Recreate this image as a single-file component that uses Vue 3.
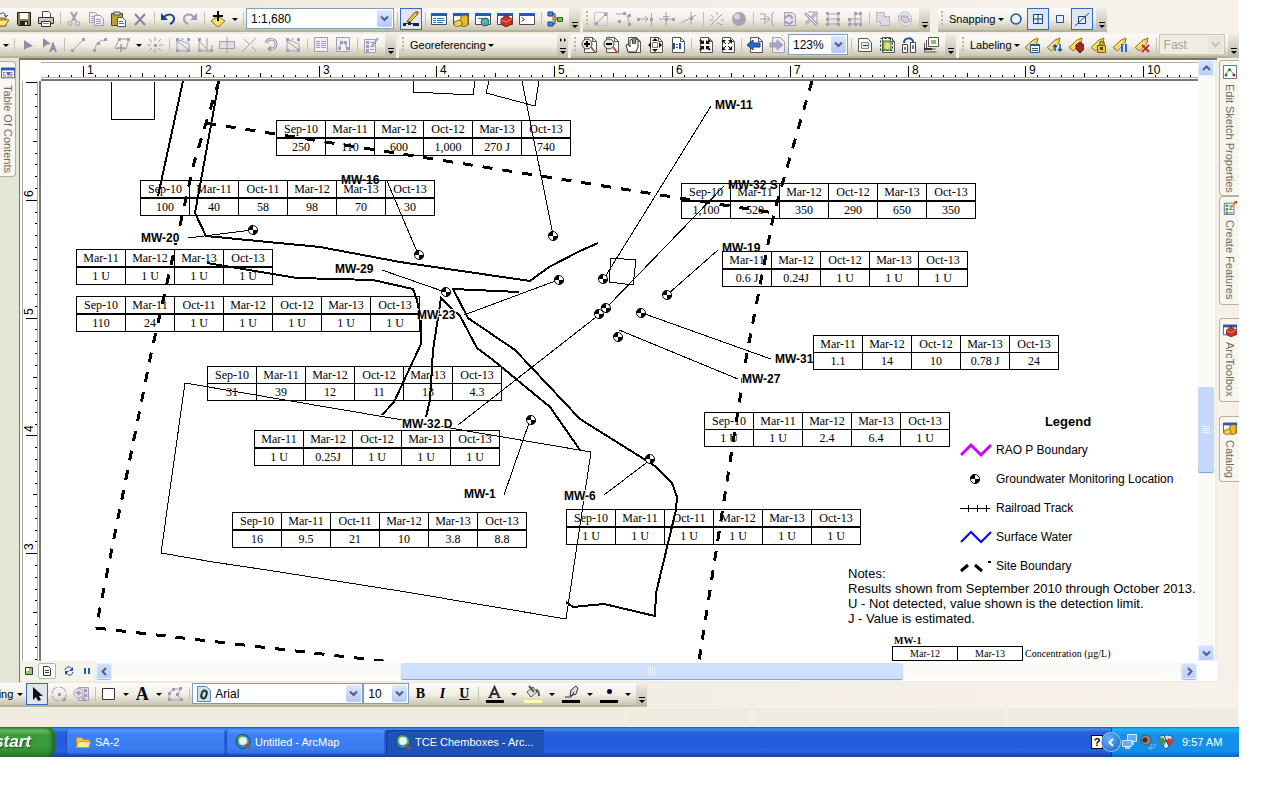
<template>
  <div class="screen">
    <div class="toolbars">
      <div v-for="(row, r) in toolbarRows" :key="r" class="toolbar-row">
        <div v-for="bar in row" :key="bar.name" class="toolbar" :class="bar.name" role="toolbar" :aria-label="bar.name">
          <span v-if="bar.grip" class="grip"></span>
          <template v-for="(item, i) in bar.items" :key="i">
            <span v-if="item === '|'" class="separator"></span>
            <button v-else-if="item === 'v'" class="arrow-button" aria-label="More"><i class="arrow"></i></button>
            <button v-else-if="item.menu" class="menu-button">{{ item.menu }}<i class="arrow"></i></button>
            <div v-else-if="item.combo" class="combo" :class="[item.size, { disabled: item.disabled }]">
              <select :aria-label="item.size" :disabled="item.disabled">
                <option>{{ item.combo }}</option>
              </select>
              <span class="combo-arrow"><svg viewBox="0 0 9 9"><path d="M1 2.5 4.5 6 8 2.5" /></svg></span>
            </div>
            <button
              v-else
              class="tool"
              :class="{ active: bar.active && bar.active.includes(item) }"
              :aria-label="item"
            >
              <svg class="icon" viewBox="0 0 16 16" v-html="icons[item]"></svg>
            </button>
          </template>
          <button class="overflow" aria-label="Toolbar options">
            <svg viewBox="0 0 11 24">
              <path v-if="bar.chevrons" d="M3 4v4l2-2zM7 4v4l2-2z" />
              <path d="M3 14h6v1H3zM3 17h6l-3 3z" />
            </svg>
          </button>
        </div>
      </div>
    </div>

    <div class="workspace">
      <div class="dock dock-left">
        <button class="dock-tab">
          <svg class="icon" viewBox="0 0 16 16" v-html="icons.contents"></svg>Table Of Contents
        </button>
      </div>

      <div class="view">
        <div class="corner"></div>
        <svg class="ruler-top">
          <path class="ruler-edge" d="M0 2.5H2000M0 17.5H2000" />
          <g v-for="t in topTicks" :key="t.n">
            <path class="tick" :d="`M${t.pos}.5 17V${17 - t.size}`" />
            <text v-if="t.label" :x="t.pos + 4" y="14">{{ t.label }}</text>
          </g>
        </svg>
        <svg class="ruler-left">
          <path class="ruler-edge" d="M2.5 0V2000M17.5 0V2000" />
          <g v-for="t in leftTicks" :key="t.n">
            <path class="tick" :d="`M17 ${t.pos}.5H${17 - t.size}`" />
            <text v-if="t.label" :transform="`translate(13 ${t.pos - 3}) rotate(-90)`">{{ t.label }}</text>
          </g>
        </svg>

        <main class="map">
          <svg class="drawing">
            <g transform="translate(-41 -81)">
              <path v-for="d in thinLines" :key="d" class="thin" :d="d" />
              <path v-for="d in roads" :key="d" class="road" :d="d" />
              <path v-for="d in boundary" :key="d" class="site" :d="d" />
              <path v-for="d in leaders" :key="d" class="thin" :d="d" />
              <g v-for="w in wells" :key="w.join()" :transform="`translate(${w[0]} ${w[1]})`" v-html="wellMark"></g>
              <text v-for="l in labels" :key="l.text" class="well-label" :x="l.x" :y="l.y">{{ l.text }}</text>
            </g>
          </svg>

          <table
            v-for="box in chemboxes"
            :key="box.x + '-' + box.y"
            class="chembox"
            :class="{ light: box.light }"
            :style="{ left: box.x - 41 + 'px', top: box.y - 81 + 'px' }"
          >
            <thead>
              <tr><th v-for="c in box.cells" :key="c[0]" scope="col">{{ c[0] }}</th></tr>
            </thead>
            <tbody>
              <tr><td v-for="c in box.cells" :key="c[0]">{{ c[1] }}</td></tr>
            </tbody>
          </table>

          <section class="legend">
            <h2>Legend</h2>
            <ul>
              <li v-for="l in legend" :key="l.text">
                <svg viewBox="0 0 32 16" v-html="l.mark"></svg>{{ l.text }}
              </li>
            </ul>
          </section>

          <div class="notes">
            <p>Notes:</p>
            <p>Results shown from September 2010 through October 2013.</p>
            <p>U - Not detected, value shown is the detection limit.</p>
            <p>J - Value is estimated.</p>
          </div>

          <div class="sample">
            <strong>MW-1</strong>
            <div class="sample-row">
              <table>
                <tbody>
                  <tr><td>Mar-12</td><td>Mar-13</td></tr>
                  <tr><td></td><td></td></tr>
                </tbody>
              </table>
              <span>Concentration (µg/L)</span>
            </div>
          </div>
        </main>

        <div class="scroll-v">
          <button class="scroll-button" aria-label="Scroll up"><svg viewBox="0 0 9 9"><path d="M1 6 4.5 2.5 8 6" /></svg></button>
          <div class="track">
            <div class="thumb"><svg viewBox="0 0 8 8"><path d="M0 .5h8M0 2.5h8M0 4.5h8M0 6.5h8" /></svg></div>
          </div>
          <button class="scroll-button" aria-label="Scroll down"><svg viewBox="0 0 9 9"><path d="M1 2.5 4.5 6 8 2.5" /></svg></button>
        </div>

        <div class="scroll-h">
          <div class="view-buttons">
            <button v-for="n in ['dataView', 'layoutView', 'refresh', 'pause']" :key="n" :class="n" :aria-label="n">
              <svg viewBox="0 0 10 10" v-html="icons[n]"></svg>
            </button>
          </div>
          <button class="scroll-button" aria-label="Scroll left"><svg viewBox="0 0 9 9"><path d="M6 1 2.5 4.5 6 8" /></svg></button>
          <div class="track">
            <div class="thumb"><svg viewBox="0 0 8 8"><path d="M.5 0v8M2.5 0v8M4.5 0v8M6.5 0v8" /></svg></div>
          </div>
          <button class="scroll-button" aria-label="Scroll right"><svg viewBox="0 0 9 9"><path d="M3 1 6.5 4.5 3 8" /></svg></button>
        </div>
      </div>

      <div class="dock dock-right">
        <button v-for="t in rightTabs" :key="t.text" class="dock-tab" :class="t.icon">
          <svg class="icon" viewBox="0 0 16 16" v-html="icons[t.icon]"></svg>{{ t.text }}
        </button>
      </div>
    </div>

    <div class="toolbar-row draw-row">
      <div class="toolbar" role="toolbar" aria-label="Draw">
        <button class="menu-button drawing-menu">Drawing<i class="arrow"></i></button>
        <button class="tool active" aria-label="Select elements"><svg class="icon" viewBox="0 0 16 16" v-html="icons.pointer"></svg></button>
        <button class="tool" aria-label="Rotate"><svg class="icon" viewBox="0 0 16 16" v-html="icons.rotateElement"></svg></button>
        <button class="tool" aria-label="Zoom to elements"><svg class="icon" viewBox="0 0 16 16" v-html="icons.zoomElements"></svg></button>
        <span class="separator"></span>
        <button class="tool" aria-label="Rectangle"><svg class="icon" viewBox="0 0 16 16" v-html="icons.rectangle"></svg></button>
        <button class="arrow-button" aria-label="Shapes"><i class="arrow"></i></button>
        <button class="tool letter big">A</button>
        <button class="arrow-button" aria-label="Text tools"><i class="arrow"></i></button>
        <button class="tool" aria-label="Edit vertices"><svg class="icon" viewBox="0 0 16 16" v-html="icons.editPolygon"></svg></button>
        <span class="separator"></span>
        <div class="combo font">
          <svg class="icon" viewBox="0 0 16 16" v-html="icons.openType"></svg>
          <select aria-label="Font"><option>Arial</option></select>
          <span class="combo-arrow"><svg viewBox="0 0 9 9"><path d="M1 2.5 4.5 6 8 2.5" /></svg></span>
        </div>
        <div class="combo font-size">
          <select aria-label="Font size"><option>10</option></select>
          <span class="combo-arrow"><svg viewBox="0 0 9 9"><path d="M1 2.5 4.5 6 8 2.5" /></svg></span>
        </div>
        <button class="tool letter">B</button>
        <button class="tool letter italic">I</button>
        <button class="tool letter underline">U</button>
        <span class="separator"></span>
        <template v-for="n in ['fontColor', 'fillColor', 'lineColor', 'markerColor']" :key="n">
          <button class="tool color" :aria-label="n"><svg viewBox="0 0 18 18" v-html="icons[n]"></svg></button>
          <button class="arrow-button" :aria-label="n + ' options'"><i class="arrow"></i></button>
        </template>
        <button class="overflow" aria-label="Toolbar options">
          <svg viewBox="0 0 11 24"><path d="M3 14h6v1H3zM3 17h6l-3 3z" /></svg>
        </button>
      </div>
    </div>

    <div class="status">
      <span></span><span></span><span></span><span></span>
    </div>

    <footer class="taskbar">
      <button class="start"><span>start</span></button>
      <button v-for="t in tasks" :key="t.text" class="task" :class="{ current: t.current }">
        <svg class="icon" viewBox="0 0 16 16" v-html="icons[t.icon]"></svg><span>{{ t.text }}</span>
      </button>
      <button class="help" aria-label="Help">?</button>
      <div class="tray">
        <button class="tray-toggle" aria-label="Show hidden icons"><svg viewBox="0 0 9 9"><path d="M6 1 2.5 4.5 6 8" /></svg></button>
        <svg v-for="n in ['network', 'volume', 'shield']" :key="n" class="icon" viewBox="0 0 16 16" v-html="icons[n]"></svg>
        <time>9:57 AM</time>
      </div>
    </footer>
  </div>
</template>

<script setup>
// small helpers for the 16px toolbar glyphs
const GREY = '#a09db5'
const line = (d, c = GREY, w = 1) => `<path d="${d}" fill="none" stroke="${c}" stroke-width="${w}"/>`
const fill = (d, c = GREY, s = 'none') => `<path d="${d}" fill="${c}" stroke="${s}"/>`
const dots = (pts, c = GREY) => pts.map(([x, y]) => `<rect x="${x}" y="${y}" width="3" height="3" fill="${c}"/>`).join('')

const page = fill('M3.5 .5h8l4 4v11h-12z', '#fff', '#555') + line('M11.5 .5v4h4', '#555')
const win = fill('M.5 2.5h15v11H.5z', '#fff', '#4a4a50') + fill('M0 2h16v3H0z', '#2358c4')
const tag = fill('M1 10.5 9 3l5-2-1 5-7.5 8z', '#f2d84a', '#8a7426') + line('m4 10 6-6m-4 8 6-6', '#fff8b8')
const toolbox = fill('M4 8l5-3 6 3v5l-6 3-5-3z', '#cf3527', '#7d1a12') + line('M7 6c0-3 5-3 5 0', '#7d1a12') + line('M4 9l5 2 6-3', '#f0897c')
const cabinet = fill('M8 5l5-1 2 2v8l-5 2-3-2z', '#e5b92b', '#8a6a10') + fill('M1 11l5-2 3 2v3l-5 2-3-2z', '#f0cf4c', '#8a6a10')
const sheet = (x, y) => fill(`M${x}.5 ${y}.5h6l3 3v7h-9z`, '#eeeef4', GREY) + line(`M${x + 2} ${y + 4}.5h5m-5 2h5m-5 2h5`)
const globe = '<circle cx="8" cy="7.500" r="7" fill="#2b8ea8" stroke="#14506a"/>' + fill('M3 3l4-2 1 3-3 3-2 1zM10 3l4 3-1 4-3-2z', '#62a83c') +
  '<circle cx="8" cy="7" r="4" fill="#e8f6fc" stroke="#c8d4dc"/>' + line('m11 10 4 5', '#b4482a', 2)

const icons = {
  open: fill('M-3 5h6l2 2h7v8H-3z', '#e8b93c', '#8a6a1a') + fill('M-1 15l4-6h12l-4 6z', '#ffe48a', '#8a6a1a') + line('M6 3c3-2 5-1 6 2m-2-1 2 2 2-2', '#1f55a8'),
  save: fill('M1.500 1.500h13v13h-12l-1-1z', '#8b8343', '#1c1c1c') + fill('M4 2h8v6H4z', '#fff') + fill('M4 10h8v5H4z', '#222') + fill('M9 11h2v3H9z', '#ddd'),
  print: fill('M4.500 .5h6l2 2v4h-8z', '#fff', '#444') + fill('M.5 6.500h15v6H.5z', '#c9c9c2', '#333') + fill('M3.500 10.500h9v5h-9z', '#fff', '#333') + fill('M11 8h3v1h-3z', '#e8c020') + line('M5 12.500h6', '#888'),
  cut: line('M5 1l5 9M11 1 6 10', GREY, 2) + '<circle cx="4" cy="12.500" r="2" fill="none" stroke="#a09db5"/><circle cx="11.500" cy="12.500" r="2" fill="none" stroke="#a09db5"/>',
  copy: sheet(1, 1) + sheet(6, 4),
  paste: fill('M1.500 2.500h11v12h-11z', '#c29a3a', '#5a4415') + fill('M4 1h6v3H4z', '#d8d4c8', '#555') + fill('M7.500 6.500h5l3 3v6h-8z', '#fff', '#3b5a96') + line('M9 10.500h4m-4 2h5', '#3b6fc0'),
  remove: line('M3 3l10 11M13 3 3 14', '#8583a0', 2),
  undo: line('M4 6c4-4 10-3 10 2 0 3-2 4-4 5', '#14418f', 2) + fill('M1 2v7h7z', '#14418f'),
  redo: line('M12 6C8 2 2 3 2 8c0 3 2 4 4 5', GREY, 2) + fill('M15 2v7H8z'),
  addData: fill('M8 5l7 5-7 6-7-6z', '#f6df63', '#8b7420') + line('M8 0v10M3 5h10', '#000', 2),
  editor: dots([[0, 12], [5, 11], [10, 12], [13, 12]], '#222') + line('M1 13l5-1 5 1h4', '#222') + fill('M5 9l7-8 3 2-7 7-4 1z', '#f2c63a', '#7a5a30') + fill('M12 1l3 2 1-2-2-1z', '#d04a3a'),
  toc: win + line('M2 7.500h3m1 0h7M2 9.500h3m1 0h8M2 11.500h3m1 0h6', '#2a78c8'),
  contents: win + line('M2 7.500h3m1 0h7M2 9.500h3m2 0h7M2 11.500h4m1 0h6', '#2a78c8') + dots([[7, 7]], '#d23'),
  catalogWin: win + cabinet,
  search: win + line('M3 7.500h10', '#2a78c8') + '<circle cx="10" cy="11" r="4" fill="#4fa8b8" stroke="#215e78"/>' + fill('M8 9h3l1 2-2 2z', '#72bd52'),
  toolboxWin: win + toolbox,
  python: win + line('M3 6.500l2 2-2 2', '#000'),
  model: fill('M1 1h5v4H1zM1 11h5v4H1z', '#3f8fe0', '#143f80') + fill('M10.500 6.500h5v4h-5z', '#74c043', '#2f6a1a') + line('M6 3h2v10H6m2-5h3', '#333') + fill('M6 6h3v3H6z', '#f0cf30', '#80691a'),
  snap1: fill('M1.500 1.500h13v13h-13z', 'none', '#c5c3d2') + line('M4 12l8-8') + dots([[2, 11], [11, 2]]),
  snap2: line('M1 3h8c3 0 5 4 5 11') + dots([[8, 1], [13, 3], [13, 12], [3, 9]]),
  snap3: line('M1 8h10M8 5l3 3-3 3M14.500 2v13') + dots([[0, 7], [13, 7]]),
  snap4: line('M7 1v14M0 8h6m3 0h6M4 5.500h6') + dots([[6, 7], [13, 7]]),
  snap5: line('M0 12 15 4M10 1v13') + dots([[9, 6]]),
  snap6: line('M2 14 13 3M2 4l3 3m3 5 5 2M8 1v3M1 9h3m8 0h3'),
  sphere: '<circle cx="8" cy="8" r="7" fill="#a6a4b4"/><circle cx="6" cy="5.500" r="3" fill="#d8d6e0"/>',
  extend: line('M1 3h5v10M1 8h9M8 5l3 3-3 3M15 1l-2 2v10l2 2'),
  flip: fill('M3.500 1.500h8l3 3v10h-11z', '#e6e4ec', GREY) + line('M4 7c3-4 7-3 7 1M12 10c-3 4-7 3-7 0', GREY, 2),
  cross: line('M2 2l12 12M13 2 3 13', GREY, 3) + line('M2 2l12 12M13 2 3 13', '#eee') + line('M5 1h9v13'),
  gridBox: line('M2 3h12M2 8h12M2 13h12M3 2v12M13 2v12') + dots([[1, 1], [12, 1], [1, 7], [12, 7], [1, 12], [12, 12]]),
  gridTree: line('M3 13h11M3 8h11M8 3v10M3 8v5M14 2v11M8 3h6') + dots([[1, 7], [7, 1], [12, 1], [1, 12], [7, 12], [12, 12]]),
  union: `<path d="M1.500 1.500h8v4h5v9h-9v-4h-4z" fill="#dddae6" stroke="${GREY}" stroke-dasharray="2 1"/>`,
  buffer: `<path d="M1.500 5l4-4h5l4 5v5l-4 4h-4l-5-5z" fill="#e6e4ec" stroke="${GREY}" stroke-dasharray="2 1"/>` + fill('M4 5h6l3 5-5 2-4-3z', '#cfcddb', GREY),
  snapPoint: '<circle cx="8" cy="8" r="5" fill="#e9f3ff" stroke="#24509c" stroke-width="1.500"/>',
  snapEnd: fill('M3.500 3.500h9v9h-9z', '#e9f3ff', '#1d3d78') + line('M8 3v10M3 8h10', '#1d3d78'),
  snapVertex: fill('M4.500 4.500h7v7h-7z', '#e9f3ff', '#24509c'),
  snapEdge: fill('M4.500 5.500h7v7h-7z', '#e9f3ff', '#1d3d78') + line('M1 15 15 2', '#1d3d78'),
  editArrow: fill('M4 3v10l3-2 6-2z', '#8f8da8'),
  editText: fill('M1 1v10l3-3 5-1z', '#8f8da8') + line('M8 15l3-8 3 8M9 12h4', '#8f8da8', 2),
  straight: line('M2 14 14 2') + dots([[1, 12], [12, 1]]),
  curve: line('M3 14C3 7 7 3 14 3') + dots([[1, 12], [5, 5], [12, 1]]),
  polygon: line('M4 12 1 11 5 2h10l-3 10h-3') + line('M7 7v8M3 11h8', '#777596') + dots([[4, 1], [13, 1]]),
  point: line('M8 0v4M8 12v4M0 8h4m8 0h4M2 2l3 3m6 6 3 3M14 2l-3 3m-6 6-3 3') + dots([[7, 7]]),
  cutPoly: line('M2 2v12h12V7L2 2m4 0h3m3 0h2v3M2 4l12 9') + dots([[1, 1], [1, 12], [12, 12], [12, 1]]),
  reshape: line('M2 2v12M2 4l8 8M10 1v14M4 14h11V8') + dots([[1, 1], [1, 12], [13, 12]]),
  split: fill('M.5 4.500h15v7H.5z', '#e0dee8', GREY) + line('M8 0v16'),
  splitLine: line('M1 15 15 1M3 2l5 5m3 3 4 4'),
  rotate: line('M3 6c2-5 10-5 10 1 0 3-2 5-5 5', GREY, 3) + line('M3 6c2-5 10-5 10 1 0 3-2 5-5 5', '#e8e6ee') + fill('M8 8v7l-4-3z'),
  attributes: fill('M1.500 .5h13v14h-13z', '#f0eff4', GREY) + line('M3 4.500h4m1 0h5M3 6.500h4m1 0h5M3 8.500h4m1 0h5M3 10.500h4m1 0h5'),
  sketchProps: fill('M1.500 .5h13v14h-13z', '#f0eff4', GREY) + line('M4 11l2-5h4l2 5') + dots([[3, 10], [5, 4], [9, 4], [11, 10]]),
  createWin: fill('M1.500 2.500h11v13h-11z', '#f0eff4', GREY) + line('M7 5.500h4M7 9.500h4M7 12.500h4') + dots([[3, 4], [3, 8], [3, 12]]) + line('M9 9l6-8', GREY, 2),
  zoomIn: page + '<circle cx="6" cy="7" r="5" fill="#e4e4e4" stroke="#444"/>' + line('M6 4v6M3 7h6', '#000', 2) + line('m10 10 4 5', '#a8523a', 2),
  zoomOut: page + '<circle cx="6" cy="7" r="5" fill="#e4e4e4" stroke="#444"/>' + line('M3 7h6', '#000', 2) + line('m10 10 4 5', '#a8523a', 2),
  pan: page + fill('M3 15 1 8l2-1 2 3V3l2-1 1 5V1l2 0v6l1-5 2 1v7l-2 5z', '#fff', '#333'),
  wholePage: page + fill('M8 1 5 4h6zM8 15l-3-3h6zM1 8l3-3v6zM15 8l-3-3v6z', '#111') + line('M5.500 5.500h5v5h-5z', '#777'),
  actual: page + line('M5 6v6M8 7v1M8 10v1M11 6v6', '#1d4f9e', 2),
  fixedIn: page + fill('M7 3v4H3zM9 3v4h4zM7 13V9H3zM9 13V9h4z', '#111') + line('M3 3l3 3m7-3-3 3M3 13l3-3m7 3-3-3', '#111', 2),
  fixedOut: page + fill('M3 3h4L3 7zM13 3H9l4 4zM3 13h4L3 9zM13 13H9l4-4z', '#111') + line('M4 4l3 3m5-3L9 7m-5 5 3-3m5 3-3-3', '#111'),
  back: page + fill('M0 8l6-5v3h7v4H6v3z', '#2a68d0', '#174391'),
  forward: fill('M3.500 .5h8l4 4v11h-12z', '#ebeaf0', GREY) + fill('M14 8 8 3v3H1v4h7v3z', '#a9a7bb', GREY),
  draft: fill('M1.500 1.500h9l4 4v9h-13z', '#fff', '#555') + fill('M4.500 5.500h7v6h-7z', '#e8eef8', '#888') + line('M6 8.500h5', '#245'),
  focus: page + fill('M4 4h8v9H4z', '#9ccc74', '#39702c') + '<path d="M1.500 1.500h12v12h-12z" fill="none" stroke="#222" stroke-dasharray="2 2"/>' + fill('M7 5l5 3-3 5-4-3z', '#e9dc6c'),
  changeLayout: fill('M1.500 7.500h5v8h-5zM9.500 5.500h5v10h-5z', '#fff', '#444') + fill('M3 10h2v3H3zM11 8h2v4h-2z', '#4b86d8') + line('M3 6c0-6 9-6 9-1', '#1b4f9c', 2),
  pages: fill('M5.500 .5h10v9h-10z', '#fff', '#555') + line('M3.500 3v9h9M1.500 6v9h12', '#555') + fill('M8 3h5v4H8z', '#8fc06c') + line('M1 12h8', '#333', 2),
  label1: tag + fill('M6.500 7.500h9v8h-9z', '#fff', '#1c58b8') + line('M6 8h10', '#1c58b8', 2) + line('M8 11.500h6m-6 2h6', '#555'),
  label2: tag + line('M9 14V8m-2 2 2-2 2 2m3-3v7m-2-2 2 2 2-2', '#1c50b0', 1.5),
  label3: tag + fill('M8 8l4-3 4 3v4l-4 4-4-4z', '#a82820', '#61130e'),
  label4: tag + line('M10 9V6c0-2 4-2 4 0v3', '#8a6a10', 1.5) + fill('M7.500 8.500h8v7h-8z', '#f0c840', '#7a5c10') + dots([[10, 10]], '#5c430a'),
  label5: tag + line('M10 7v8m4-8v8', '#2a68d0', 2),
  label6: tag + line('M8 8l7 7m0-7-7 7', '#d02a20', 2),
  pointer: fill('M4 1v13l3-3 2 4 3-1-2-4h4z', '#111'),
  rotateElement: '<circle cx="8" cy="8" r="7" fill="none" stroke="#a09db5" stroke-dasharray="9 2"/>' + dots([[7, 7], [12, 12]]),
  zoomElements: fill('M5.500 1.500h10v13h-10z', '#dcdae4', GREY) + dots([[11, 3], [11, 8]]) + '<circle cx="5.500" cy="7" r="4.500" fill="#eee" stroke="#a09db5"/>' + line('M3 7h5M5.500 4.500v5M9 11l4 4', GREY, 2),
  rectangle: fill('M1.500 2.500h12v11h-12z', '#fff', '#333'),
  editPolygon: line('M2 14V8l4-5h8l-4 6 5 5z') + dots([[1, 12], [1, 6], [5, 2], [12, 1], [9, 7], [13, 12]]),
  openType: fill('M1.500 .5h9l4 4v11h-13z', '#cfe0f4', '#6485b4') + '<ellipse cx="8" cy="8.500" rx="2.500" ry="4" transform="rotate(18 8 8.500)" fill="none" stroke="#173c1c" stroke-width="2"/>',
  fontColor: fill('M0 15h18v3H0z', '#000') + line('M4 12l4.500-10L13 12M6 9h5', '#333', 2) + line('M2 12.500h4m5 0h4', '#333'),
  fillColor: fill('M0 15h18v3H0z', '#ffffb4') + fill('M3 7l6-5 4 5-6 5z', '#e4e4dc', '#555') + line('M5 1l5 6M12 5c3 0 3 3 3 6', '#555', 2),
  lineColor: fill('M0 15h18v3H0z', '#000') + fill('M8 11l1-6 5-4 2 2-2 6z', '#ddd', '#333') + line('M3 12h6l3-5', '#333'),
  markerColor: fill('M0 15h18v3H0z', '#000') + '<circle cx="9.500" cy="6.500" r="2.500" fill="#000048"/>',
  sketchTab: fill('M.5 .5h15v15H.5z', '#fff', '#3a6486') + line('M3 11l4-6 6 6', '#3da03a') + dots([[2, 10], [6, 4]], '#1d7d2b') + dots([[11, 10]], '#c61f1f'),
  createTab: fill('M1.500 2.500h11v13h-11z', '#fff', '#3a6aa0') + dots([[3, 4], [3, 8], [3, 12]], '#579c3c') + line('M7 5.500h4M7 9.500h4M7 13.500h4', '#357') + line('M8 9l6-7', '#d89b34', 2) + dots([[13, 0]], '#d44'),
  dataView: fill('M1.500 1.500h7v7h-7z', '#9fc66a', '#333') + fill('M2 2h3v3H2z', '#fff'),
  layoutView: fill('M1.500 .5h5l2 2v7h-7z', '#fff', '#333') + line('M3 4.500h4m-4 2h4', '#333'),
  refresh: line('M1 4c1-4 5-4 7-1M9 6c-1 4-5 4-7 1', '#1b4f93', 1) + fill('M9 1v4H5zM1 9V5h4z', '#1b4f93'),
  pause: fill('M2 2h2v6H2zM6 2h2v6H6z', '#2a5ca8'),
  folder: fill('M1.500 3.500h5l2 2h6v8h-13z', '#f0c850', '#b08a28') + fill('M3.500 7.500h12l-2 6h-12z', '#ffec9a', '#c8a038'),
  arcmap: globe,
  network: fill('M5.500 .5h9v7h-9z', '#5cb0f4', '#dde8f4') + fill('M.5 6.500h9v6h-9z', '#5cb0f4', '#dde8f4') + fill('M3 13h5v2H3zM9 8h3v3H9z', '#c8d0dc'),
  volume: '<circle cx="6" cy="6" r="5" fill="#8a8a84" stroke="#555"/><circle cx="5" cy="6" r="2.500" fill="#333"/>' + line('M8 14c3 0 4-2 4-4m-2 5c4 0 5-3 5-5', '#a8c8f4'),
  shield: fill('M2 2l6-1 6 1v7l-6 6-6-6z', '#d8e4f0', '#46608c') + fill('M0 6l5-3 2 4-3 4z', '#3f9a34') + fill('M8 7l3-3 5 3-4 5z', '#d6382c') + line('M6 1l2 5-3 6m3-6 3 6', '#173a7c'),
}

const toolbarRows = [
  [
    {
      name: 'standard',
      active: ['editor'],
      items: [
        'open', 'save', 'print', '|', 'cut', 'copy', 'paste', 'remove', '|', 'undo', 'redo', '|', 'addData', 'v', '|',
        { combo: '1:1,680', size: 'scale' }, '|', 'editor', '|',
        'toc', 'catalogWin', 'search', 'toolboxWin', 'python', '|', 'model',
      ],
    },
    {
      name: 'advanced',
      grip: true,
      items: [
        'snap1', 'snap2', 'snap3', 'snap4', 'snap5', '|', 'snap6', 'sphere', '|',
        'extend', 'flip', 'cross', 'gridBox', 'gridTree', '|', 'union', 'buffer',
      ],
    },
    {
      name: 'snapping',
      grip: true,
      active: ['snapEnd', 'snapEdge'],
      items: [{ menu: 'Snapping' }, 'snapPoint', 'snapEnd', 'snapVertex', 'snapEdge'],
    },
  ],
  [
    {
      name: 'edit',
      items: [
        'v', '|', 'editArrow', 'editText', '|', 'straight', 'curve', 'polygon', 'v', 'point', '|',
        'cutPoly', 'reshape', 'split', 'splitLine', 'rotate', 'cutPoly', '|', 'attributes', 'sketchProps', '|', 'createWin',
      ],
    },
    { name: 'georeferencing', grip: true, chevrons: true, items: [{ menu: 'Georeferencing' }] },
    {
      name: 'layout',
      grip: true,
      items: [
        'zoomIn', 'zoomOut', 'pan', 'wholePage', 'actual', '|', 'fixedIn', 'fixedOut', '|', 'back', 'forward',
        { combo: '123%', size: 'zoom' }, '|', 'draft', 'focus', 'changeLayout', 'pages',
      ],
    },
    {
      name: 'labeling',
      grip: true,
      items: [
        { menu: 'Labeling' }, 'label1', 'label2', 'label3', 'label4', 'label5', 'label6', '|',
        { combo: 'Fast', size: 'quality', disabled: true },
      ],
    },
  ],
]

// Rulers: ten divisions per page inch
const STEP = 11.78
const makeTicks = (start, from, to, label) => {
  const ticks = []
  for (let n = from; n <= to; n++) {
    const major = n % 10 === 0
    ticks.push({
      n,
      pos: Math.round(start + STEP * n),
      size: major ? 11 : n % 5 === 0 ? 4 : 2,
      label: major ? label(n / 10) : '',
    })
  }
  return ticks
}
const topTicks = makeTicks(42, -3, 94, (k) => k + 1)
// the 7 above the first tick is hidden behind the top ruler
const leftTicks = makeTicks(1, 0, 49, (k) => (k ? 7 - k : ''))

// Map geometry
const thinLines = [
  'M111 81L112 119H155L154 81',
  'M414 81L413 92L473 95L475 81',
  'M489 81L486 93L535 106L539 81',
  'M611 258L636 260L633 285L609 282Z',
  'M185 383L591 452L566 619L400 591L267 570L213 562L161 553Z',
]

const roads = [
  'M183 81L158 196',
  'M219 81L195 213L206 236L320 247L400 262L530 281L549 267L580 251L598 243',
  'M207 263L297 278L373 280L413 289L417 300L421 322V344L394 402L382 415',
  'M426 417L430 400L433 350L441 298L450 307L460 316L477 348L493 360L550 407L580 450',
  'M519 292L453 289L468 318L515 350L580 419L655 466L672 483L677 497L676 510L656 593L655 616L604 604L573 607L566 602',
]

const boundary = [
  'M219 81L206 123L194 163L151 354L96 628',
  'M206 123L774 213',
  'M812 81L774 213L747 353L699 661',
  'M96 628L400 663',
]

const leaders = [
  'M387 181L418 254',
  'M188 238L252 230',
  'M382 270L445 292',
  'M711 106L605 277',
  'M724 186L608 306',
  'M718 250L668 294',
  'M464 315L558 280',
  'M771 359L642 313',
  'M738 379L619 330',
  'M458 425L600 314',
  'M504 495L530 420',
  'M604 495L650 460',
  'M522 81L553 235',
]

const wells = [
  [253, 230], [419, 255], [553, 236], [446, 292], [559, 280], [603, 279], [606, 308],
  [599, 314], [667, 295], [641, 313], [618, 337], [531, 420], [650, 459],
]

const wellMark = '<circle r="4.500" fill="#fff" stroke="#000"/><path d="M0 0V-5A5 5 0 0 0-5 0zM0 0V5A5 5 0 0 0 5 0z"/>'

const labels = [
  { text: 'MW-16', x: 341, y: 184 },
  { text: 'MW-20', x: 141, y: 242 },
  { text: 'MW-29', x: 335, y: 273 },
  { text: 'MW-11', x: 715, y: 109 },
  { text: 'MW-32 S', x: 728, y: 189 },
  { text: 'MW-19', x: 722, y: 252 },
  { text: 'MW-23', x: 417, y: 319 },
  { text: 'MW-31', x: 775, y: 363 },
  { text: 'MW-27', x: 742, y: 383 },
  { text: 'MW-32 D', x: 402, y: 428 },
  { text: 'MW-1', x: 464, y: 498 },
  { text: 'MW-6', x: 564, y: 500 },
]

const chemboxes = [
  { x: 276, y: 120, cells: [['Sep-10', '250'], ['Mar-11', '110'], ['Mar-12', '600'], ['Oct-12', '1,000'], ['Mar-13', '270 J'], ['Oct-13', '740']] },
  { x: 140, y: 180, cells: [['Sep-10', '100'], ['Mar-11', '40'], ['Oct-11', '58'], ['Mar-12', '98'], ['Mar-13', '70'], ['Oct-13', '30']] },
  { x: 76, y: 249, cells: [['Mar-11', '1 U'], ['Mar-12', '1 U'], ['Mar-13', '1 U'], ['Oct-13', '1 U']] },
  { x: 76, y: 296, cells: [['Sep-10', '110'], ['Mar-11', '24'], ['Oct-11', '1 U'], ['Mar-12', '1 U'], ['Oct-12', '1 U'], ['Mar-13', '1 U'], ['Oct-13', '1 U']] },
  { x: 207, y: 366, light: true, cells: [['Sep-10', '31'], ['Mar-11', '39'], ['Mar-12', '12'], ['Oct-12', '11'], ['Mar-13', '13'], ['Oct-13', '4.3']] },
  { x: 254, y: 430, cells: [['Mar-11', '1 U'], ['Mar-12', '0.25J'], ['Oct-12', '1 U'], ['Mar-13', '1 U'], ['Oct-13', '1 U']] },
  { x: 232, y: 512, cells: [['Sep-10', '16'], ['Mar-11', '9.5'], ['Oct-11', '21'], ['Mar-12', '10'], ['Mar-13', '3.8'], ['Oct-13', '8.8']] },
  { x: 566, y: 509, cells: [['Sep-10', '1 U'], ['Mar-11', '1 U'], ['Oct-11', '1 U'], ['Mar-12', '1 U'], ['Mar-13', '1 U'], ['Oct-13', '1 U']] },
  { x: 681, y: 183, cells: [['Sep-10', '1,100'], ['Mar-11', '520'], ['Mar-12', '350'], ['Oct-12', '290'], ['Mar-13', '650'], ['Oct-13', '350']] },
  { x: 722, y: 251, cells: [['Mar-11', '0.6 J'], ['Mar-12', '0.24J'], ['Oct-12', '1 U'], ['Mar-13', '1 U'], ['Oct-13', '1 U']] },
  { x: 813, y: 335, light: true, cells: [['Mar-11', '1.1'], ['Mar-12', '14'], ['Oct-12', '10'], ['Mar-13', '0.78 J'], ['Oct-13', '24']] },
  { x: 704, y: 412, light: true, cells: [['Sep-10', '1 U'], ['Mar-11', '1 U'], ['Mar-12', '2.4'], ['Mar-13', '6.4'], ['Oct-13', '1 U']] },
]

const legend = [
  { text: 'RAO P Boundary', mark: line('M1 13 11 3l10 10L31 3', '#c800ff', 3) },
  { text: 'Groundwater Monitoring Location', mark: `<g transform="translate(15 8)">${wellMark}</g>` },
  { text: 'Railroad Track', mark: line('M0 8.500h30M8.500 5v7M17.500 5v7M26.500 5v7', '#000') },
  { text: 'Surface Water', mark: line('M1 13 11 3l10 10L31 3', '#0000ff', 2) },
  { text: 'Site Boundary', mark: line('M1 13l7-6m7 0 7 6', '#000', 3) + fill('M28 3h3v2h-3z', '#000') },
]

const rightTabs = [
  { icon: 'sketchTab', text: 'Edit Sketch Properties' },
  { icon: 'createTab', text: 'Create Features' },
  { icon: 'toolboxWin', text: 'ArcToolbox' },
  { icon: 'catalogWin', text: 'Catalog' },
]

const tasks = [
  { icon: 'folder', text: 'SA-2' },
  { icon: 'arcmap', text: 'Untitled - ArcMap' },
  { icon: 'arcmap', text: 'TCE Chemboxes - Arc...', current: true },
]
</script>

<style>
body {
  background: #fff;
}
</style>

<style scoped>
.screen {
  height: calc(100vh - 43px);
  margin-right: 41px;
  display: flex;
  flex-direction: column;
  overflow: hidden;
  background: linear-gradient(to right, #eeeade, #f7f1eb);
  color: #000;
  font-family: 'Liberation Sans', Arial, sans-serif;
  font-size: 11px;
}

button,
select {
  margin: 0;
  padding: 0;
  border: 0;
  background: none;
  color: inherit;
  font: inherit;
}

svg {
  display: block;
}

.icon {
  width: 16px;
  height: 16px;
  flex: none;
}

/* Toolbars */
.toolbars {
  padding-top: 8px;
}

.toolbar-row {
  display: flex;
  gap: 3px;
  margin-bottom: 2px;
}

.toolbars .toolbar-row:last-child {
  margin-bottom: 0;
}

.toolbar {
  height: 24px;
  box-sizing: border-box;
  display: flex;
  align-items: flex-start;
  border-bottom: 2px solid #b5b29a;
  background: linear-gradient(#fdfbf9, #f2efe6 50%, #c9c6b3);
  flex: none;
}

.standard {
  margin-left: -9px;
}

.snapping {
  margin-left: 5px;
}

.georeferencing {
  width: 169px;
}

.labeling {
  flex: 1 1 auto;
}

.grip {
  width: 7px;
  height: 22px;
  background: repeating-linear-gradient(#bab7a6 0 2px, transparent 2px 4px) 3px 3px / 2px 16px no-repeat;
}

.tool {
  width: 22px;
  height: 22px;
  display: grid;
  place-items: center;
  flex: none;
}

.tool.active {
  background: #dfe6f2;
  box-shadow: inset 0 0 0 1px #316ac5;
}

.separator {
  width: 1px;
  height: 14px;
  margin: 4px 2px 0 3px;
  background: #c5c2b2;
}

.arrow {
  width: 0;
  border: 3px solid transparent;
  border-top-color: #000;
  border-bottom: 0;
}

.arrow-button {
  width: 11px;
  height: 22px;
  display: grid;
  place-items: center;
}

.menu-button {
  height: 22px;
  display: flex;
  align-items: center;
  gap: 2px;
  padding: 0 1px 0 4px;
  flex: none;
}

.overflow {
  width: 11px;
  height: 24px;
  margin: 0 0 0 auto;
  background: linear-gradient(#efece4, #b9b6a4);
}

.tool + .overflow,
.arrow-button + .overflow {
  margin-left: 3px;
}

.overflow svg {
  width: 11px;
  height: 24px;
}

.combo {
  height: 21px;
  box-sizing: border-box;
  display: flex;
  align-items: center;
  padding: 1px;
  border: 1px solid #7f9db9;
  background: #fff;
  font-size: 12px;
}

.combo select {
  flex: 1;
  min-width: 0;
  padding-left: 3px;
  appearance: none;
}

.combo .icon {
  margin-left: 2px;
}

.combo-arrow {
  width: 15px;
  align-self: stretch;
  display: grid;
  place-items: center;
  border-radius: 2px;
  background: linear-gradient(#dde7fd, #b4c8f6);
}

.combo-arrow svg,
.scroll-button svg,
.tray-toggle svg {
  width: 9px;
  height: 9px;
  fill: none;
  stroke: #4d6185;
  stroke-width: 2;
}

.scale {
  width: 148px;
}

.zoom {
  width: 60px;
}

.quality {
  width: 66px;
}

.font {
  width: 171px;
}

.font-size {
  width: 46px;
}

.combo.disabled {
  background: #f0ede2;
  border-color: #c9c7ba;
  color: #a6a394;
}

.combo.disabled select {
  opacity: 1;
}

.combo.disabled .combo-arrow {
  background: #e9e6d9;
}

.combo.disabled .combo-arrow svg {
  stroke: #c3c0b0;
}

/* Workspace */
.workspace {
  flex: 1;
  min-height: 0;
  display: flex;
}

.dock {
  display: flex;
  flex-direction: column;
  align-items: flex-start;
}

.dock-left {
  width: 19px;
  background: #e4e6d5;
  border-right: 1px solid #7d7668;
}

.dock-right {
  width: 20px;
  padding-left: 2px;
  background: #f6f0e9;
}

.dock-tab {
  box-sizing: border-box;
  display: flex;
  align-items: center;
  gap: 5px;
  writing-mode: vertical-rl;
  white-space: nowrap;
  border: 1px solid #b5b19c;
  background: #f9f5ef;
  color: #6d6a60;
}

.dock-tab .icon {
  width: 14px;
  height: 14px;
}

.dock-left .dock-tab {
  width: 16px;
  height: 116px;
  margin-top: 3px;
  padding-top: 4px;
  border-left: 0;
  border-radius: 0 4px 4px 0;
}

.dock-right .dock-tab {
  width: 20px;
  padding: 4px 0;
  border-right: 0;
  border-radius: 4px 0 0 4px;
}

.dock-right .sketchTab {
  height: 136px;
  margin-top: 2px;
}

.dock-right .createTab {
  height: 109px;
}

.dock-right .toolboxWin {
  height: 84px;
  margin-top: 13px;
}

.dock-right .catalogWin {
  height: 66px;
  margin-top: 14px;
}

.view {
  flex: 1;
  min-width: 0;
  display: grid;
  grid-template-columns: 21px minmax(0, 1fr) 19px;
  grid-template-rows: 21px minmax(0, 1fr) 21px;
  border-top: 2px solid #7d7668;
  background: #fff;
}

.ruler-top,
.ruler-left {
  box-sizing: border-box;
  width: 100%;
  height: 100%;
  min-width: 0;
  font-size: 12px;
}

.ruler-top {
  border-bottom: 2px solid #7d7668;
}

.ruler-left {
  border-right: 2px solid #7d7668;
}

.ruler-edge {
  stroke: #b3ae9b;
}

.tick {
  stroke: #000;
  shape-rendering: crispEdges;
}

.map {
  position: relative;
  overflow: hidden;
  background: #fff;
}

.drawing {
  position: absolute;
  width: 100%;
  height: 100%;
}

.thin,
.road,
.site {
  fill: none;
  stroke: #000;
  shape-rendering: crispEdges;
}

.road {
  stroke-width: 2;
}

.site {
  stroke-width: 3;
  stroke-dasharray: 10 10;
}

.well-label {
  font-size: 12px;
  font-weight: bold;
  stroke: #fff;
  stroke-width: 2px;
  paint-order: stroke;
}

.chembox {
  position: absolute;
  border-collapse: collapse;
  table-layout: fixed;
  font-family: 'Liberation Serif', 'Times New Roman', serif;
  font-size: 12px;
  line-height: 16px;
}

.chembox th,
.chembox td {
  width: 48px;
  padding: 0;
  border: 1px solid #000;
  font-weight: normal;
  text-align: center;
}

.chembox th {
  border-bottom-width: 2px;
}

.chembox.light th {
  border-bottom-width: 1px;
}

.legend {
  position: absolute;
  left: 919px;
  top: 333px;
  width: 216px;
  font-size: 12px;
}

.legend h2 {
  margin: 0 0 6px;
  font-size: 13px;
  line-height: 15px;
  text-align: center;
}

.legend ul {
  margin: 0;
  padding: 0;
  list-style: none;
}

.legend li {
  height: 29px;
  display: flex;
  align-items: center;
  gap: 4px;
  white-space: nowrap;
}

.legend svg {
  width: 32px;
  height: 16px;
}

.notes {
  position: absolute;
  left: 807px;
  top: 485px;
  font-size: 13px;
  line-height: 15px;
  white-space: nowrap;
}

.notes p {
  margin: 0;
}

.sample {
  position: absolute;
  left: 851px;
  top: 555px;
  font-family: 'Liberation Serif', 'Times New Roman', serif;
  font-size: 10px;
  line-height: 10px;
}

.sample strong {
  display: block;
  padding-left: 2px;
}

.sample-row {
  display: flex;
  gap: 2px;
  white-space: nowrap;
}

.sample-row span {
  padding-top: 3px;
}

.sample table {
  border-collapse: collapse;
}

.sample td {
  width: 64px;
  height: 13px;
  padding: 0;
  border: 1px solid #000;
  text-align: center;
}

/* Scroll bars */
.scroll-v {
  grid-column: 3;
  grid-row: 1 / 3;
  display: flex;
  flex-direction: column;
  align-items: flex-start;
  border-right: 2px solid #f0ebe2;
}

.scroll-button {
  width: 16px;
  height: 16px;
  display: grid;
  place-items: center;
  flex: none;
  border-radius: 3px;
  background: linear-gradient(#d6e2fd, #b9cdf8);
  box-shadow: inset 0 0 0 1px #e8effd, 0 1px 1px #9db4dc;
}

.track {
  flex: 1;
  display: flex;
  background: #fbfaf6;
}

.thumb {
  display: grid;
  place-items: center;
  border-radius: 2px;
  background: #c6d7fd;
  box-shadow: 0 1px 1px #7d9bd0;
}

.thumb svg {
  width: 8px;
  height: 8px;
  stroke: #eef4ff;
}

.scroll-v .track {
  flex-direction: column;
  width: 16px;
}

.scroll-v .thumb {
  height: 15%;
  margin-top: 311px;
}

.scroll-h {
  grid-column: 1 / 4;
  display: flex;
  align-items: center;
  padding: 0 20px 0 0;
  border-bottom: 1px solid #f0ebe2;
  background: #fff;
}

.scroll-h .track {
  height: 16px;
}

.scroll-h .thumb {
  width: 47%;
  margin-left: 27%;
  background: #cfe0fe;
}

.view-buttons {
  width: 76px;
  height: 20px;
  display: flex;
  align-items: center;
  background: #f5f2ea;
}

.view-buttons button {
  width: 18px;
  height: 16px;
  display: grid;
  place-items: center;
}

.view-buttons svg {
  width: 10px;
  height: 10px;
}

.view-buttons .layoutView {
  border: 1px solid #a9b4c4;
  border-radius: 2px;
  background: #fff;
  margin-right: 4px;
}

/* Draw toolbar */
.draw-row {
  margin: 1px 0 0;
}

.draw-row .color + .arrow-button {
  width: 10px;
}

.draw-row .drawing-menu {
  gap: 4px;
  margin-left: -31px;
  padding-right: 3px;
}

.letter {
  font-family: 'Liberation Serif', 'Times New Roman', serif;
  font-size: 14px;
  font-weight: bold;
}

.letter.big {
  font-size: 18px;
}

.letter.italic {
  font-style: italic;
}

.letter.underline {
  text-decoration: underline;
}

.color {
  width: 28px;
}

.color svg {
  width: 18px;
  height: 18px;
}

/* Status bar */
.status {
  height: 20px;
  display: flex;
  gap: 2px;
  background: #efebde;
}

.status span {
  box-sizing: border-box;
  width: 126px;
  border: 1px solid #f6f3ea;
}

.status span:first-child {
  flex: 1;
  border: 0;
}

.status span:nth-child(3) {
  width: 252px;
}

.status span:last-child {
  width: 232px;
}

/* Taskbar */
.taskbar {
  height: 30px;
  display: flex;
  align-items: center;
  background: linear-gradient(#1d4fc0, #4090f4 2px, #2a62dc 5px, #2259da 12px, #2662e4 24px, #1840a0);
  color: #fff;
}

.start {
  width: 55px;
  height: 30px;
  margin-right: 11px;
  display: flex;
  align-items: center;
  justify-content: flex-end;
  box-sizing: border-box;
  padding: 0 24px 0 0;
  border-radius: 0 8px 8px 0;
  background: linear-gradient(#2d7a2f, #6cbf68 3px, #3c9a3c 8px, #3a9b3a 20px, #2c7c2c);
  box-shadow: inset -3px 0 4px #1f6420;
  font-size: 17px;
  font-weight: bold;
  font-style: italic;
  text-shadow: 1px 1px 1px #204820;
}

.task {
  width: 158px;
  height: 24px;
  margin-right: 2px;
  display: flex;
  align-items: center;
  gap: 4px;
  padding-left: 9px;
  border-radius: 2px;
  background: linear-gradient(#5a9cfa, #3c81f3 4px, #3a7df2 19px, #2f6be0);
  box-shadow: inset 1px 0 #2050b4;
  white-space: nowrap;
}

.task.current {
  background: #1e52b7;
  box-shadow: inset 1px 1px 1px #123a8a;
}

.help {
  width: 12px;
  height: 14px;
  margin: 0 8px 0 auto;
  background: #fffef0;
  border: 1px solid #000;
  color: #00003c;
  font-weight: bold;
  line-height: 12px;
}

.tray {
  width: 128px;
  height: 30px;
  display: flex;
  align-items: center;
  gap: 2px;
  background: linear-gradient(#0d6dd0, #18b6f4 2px, #1290ea 8px, #128fe9 24px, #0b66be);
  box-shadow: inset 1px 0 #0c3c86;
}

.tray-toggle {
  width: 18px;
  height: 18px;
  margin-left: -9px;
  display: grid;
  place-items: center;
  border-radius: 50%;
  background: radial-gradient(circle at 35% 30%, #64b4fa, #1560d0);
  box-shadow: 0 0 0 1px #a8cdf6;
}

.tray-toggle svg {
  stroke: #fff;
}

.tray time {
  margin-left: 6px;
  white-space: nowrap;
}
</style>
